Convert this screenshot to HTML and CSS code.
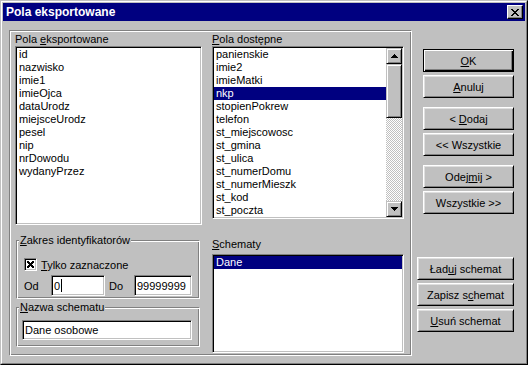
FILE: index.html
```html
<!DOCTYPE html>
<html lang="pl">
<head>
    <meta charset="UTF-8">
    <meta name="viewport" content="width=device-width, initial-scale=1.0">
    <title>Pola eksportowane</title>
    <link rel="stylesheet" href="styles.css">
</head>
<body>
<div class="window">
    <div class="frame">
        <div class="titlebar">
            <span class="title">Pola eksportowane</span>
            <button class="close-btn">
                <svg width="8" height="7" viewBox="0 0 8 7" shape-rendering="crispEdges"><path fill="#000" d="M0 0h2v1H0zM6 0h2v1H6zM1 1h2v1H1zM5 1h2v1H5zM2 2h4v1H2zM3 3h2v1H3zM2 4h4v1H2zM1 5h2v1H1zM5 5h2v1H5zM0 6h2v1H0zM6 6h2v1H6z"/></svg>
            </button>
        </div>

        <div class="content">
            <div class="panel">
                <div class="col-left">
                    <div class="label">Pola <u>e</u>ksportowane</div>
                    <ul class="listbox list-exported">
                        <li>id</li>
                        <li>nazwisko</li>
                        <li>imie1</li>
                        <li>imieOjca</li>
                        <li>dataUrodz</li>
                        <li>miejsceUrodz</li>
                        <li>pesel</li>
                        <li>nip</li>
                        <li>nrDowodu</li>
                        <li>wydanyPrzez</li>
                    </ul>

                    <fieldset class="group group-range">
                        <legend><u>Z</u>akres identyfikatorów</legend>
                        <div class="check-row">
                            <span class="checkbox">
                                <svg width="7" height="7" viewBox="0 0 7 7" shape-rendering="crispEdges"><path fill="#000" d="M0 0h2v1H0zM5 0h2v1H5zM0 1h3v1H0zM4 1h3v1H4zM1 2h5v1H1zM2 3h3v1H2zM1 4h5v1H1zM0 5h3v1H0zM4 5h3v1H4zM0 6h2v1H0zM5 6h2v1H5z"/></svg>
                            </span>
                            <span><u>T</u>ylko zaznaczone</span>
                        </div>
                        <div class="range-row">
                            <span class="range-label">Od</span>
                            <div class="edit edit-from">0<span class="caret"></span></div>
                            <span class="range-label range-to">Do</span>
                            <div class="edit edit-to">99999999</div>
                        </div>
                    </fieldset>

                    <fieldset class="group group-name">
                        <legend><u>N</u>azwa schematu</legend>
                        <div class="edit edit-name">Dane osobowe</div>
                    </fieldset>
                </div>

                <div class="col-right">
                    <div class="label"><u>P</u>ola dostępne</div>
                    <div class="listbox list-available">
                        <ul class="items">
                            <li>panienskie</li>
                            <li>imie2</li>
                            <li>imieMatki</li>
                            <li class="selected">nkp</li>
                            <li>stopienPokrew</li>
                            <li>telefon</li>
                            <li>st_miejscowosc</li>
                            <li>st_gmina</li>
                            <li>st_ulica</li>
                            <li>st_numerDomu</li>
                            <li>st_numerMieszk</li>
                            <li>st_kod</li>
                            <li>st_poczta</li>
                        </ul>
                        <div class="scrollbar">
                            <div class="sb-btn">
                                <svg width="7" height="4" viewBox="0 0 7 4" shape-rendering="crispEdges"><path fill="#000" d="M3 0h1v1H3zM2 1h3v1H2zM1 2h5v1H1zM0 3h7v1H0z"/></svg>
                            </div>
                            <div class="sb-thumb"></div>
                            <div class="sb-track"></div>
                            <div class="sb-btn">
                                <svg width="7" height="4" viewBox="0 0 7 4" shape-rendering="crispEdges"><path fill="#000" d="M0 0h7v1H0zM1 1h5v1H1zM2 2h3v1H2zM3 3h1v1H3z"/></svg>
                            </div>
                        </div>
                    </div>

                    <div class="label label-schemes"><u>S</u>chematy</div>
                    <ul class="listbox list-schemes">
                        <li class="selected">Dane</li>
                    </ul>
                </div>
            </div>

            <div class="sidebar">
                <div class="btn-group">
                    <button class="btn btn-default"><u>O</u>K</button>
                    <button class="btn"><u>A</u>nuluj</button>
                </div>
                <div class="btn-group">
                    <button class="btn">&lt; <u>D</u>odaj</button>
                    <button class="btn">&lt;&lt; Wszystkie</button>
                </div>
                <div class="btn-group">
                    <button class="btn">Odej<u>m</u>ij &gt;</button>
                    <button class="btn">Wszystkie &gt;&gt;</button>
                </div>
                <div class="btn-group btn-group-schemes">
                    <button class="btn btn-wide">Ład<u>u</u>j schemat</button>
                    <button class="btn btn-wide">Zapisz s<u>c</u>hemat</button>
                    <button class="btn btn-wide"><u>U</u>suń schemat</button>
                </div>
            </div>
        </div>
    </div>
</div>
</body>
</html>
```

FILE: styles.css
```css
* {
    box-sizing: border-box;
}
body {
    margin: 0;
    font-family: "Liberation Sans", Arial, sans-serif;
    font-size: 11px;
    color: #000;
    background: #c0c0c0;
}
u {
    text-decoration: underline;
}

/* window frame */
.window {
    width: 528px;
    height: 365px;
    background: #c0c0c0;
    border: 1px solid;
    border-color: #c0c0c0 #000 #000 #c0c0c0;
}
.frame {
    height: 100%;
    padding: 1px;
    border: 1px solid;
    border-color: #fff #808080 #808080 #fff;
}
.titlebar {
    height: 18px;
    display: flex;
    align-items: center;
    justify-content: space-between;
    padding: 0 2px 0 3px;
    background: #000080;
    color: #fff;
    font-size: 12px;
    font-weight: bold;
}
.close-btn {
    width: 16px;
    height: 14px;
    padding: 0;
    display: flex;
    align-items: center;
    justify-content: center;
    background: #c0c0c0;
    border: 1px solid;
    border-color: #fff #000 #000 #fff;
    box-shadow: inset -1px -1px #808080;
}

.content {
    display: flex;
    padding: 9px 11px 0 6px;
}

/* etched panel */
.panel {
    width: 403px;
    height: 326px;
    display: grid;
    grid-template-columns: 187px 192px;
    column-gap: 10px;
    align-items: start;
    padding: 2px 0 0 5px;
    border: 1px solid;
    border-color: #808080 #fff #fff #808080;
    box-shadow: inset 1px 1px #fff, inset -1px -1px #808080;
}
.label {
    height: 13px;
    line-height: 13px;
    white-space: nowrap;
}

/* list boxes */
.listbox {
    margin: 0;
    padding: 1px;
    list-style: none;
    background: #fff;
    border: 1px solid;
    border-color: #808080 #fff #fff #808080;
    box-shadow: inset 1px 1px #000, inset -1px -1px #c0c0c0;
    overflow: hidden;
}
.listbox li {
    height: 13px;
    line-height: 13px;
    padding-left: 2px;
    white-space: nowrap;
}
.listbox li.selected {
    background: #000080;
    color: #fff;
}
.list-exported {
    height: 179px;
}
.list-available {
    height: 173px;
    display: flex;
}
.list-available .items {
    flex: 1;
    margin: 0;
    padding: 0;
    list-style: none;
}
.label-schemes {
    margin-top: 19px;
}
.list-schemes {
    height: 99px;
    margin-top: 3px;
}

/* scrollbar */
.scrollbar {
    width: 16px;
    display: flex;
    flex-direction: column;
}
.sb-btn,
.sb-thumb {
    background: #c0c0c0;
    border: 1px solid;
    border-color: #c0c0c0 #000 #000 #c0c0c0;
    box-shadow: inset 1px 1px #fff, inset -1px -1px #808080;
}
.sb-btn {
    height: 16px;
    display: flex;
    align-items: center;
    justify-content: center;
}
.sb-thumb {
    height: 54px;
}
.sb-track {
    flex: 1;
    background-image: repeating-conic-gradient(#fff 0 25%, #c0c0c0 0 50%);
    background-size: 2px 2px;
}

/* group boxes */
.group {
    margin: 0 2px 0 1px;
    min-width: 0;
    border: 1px solid;
    border-color: #808080 #fff #fff #808080;
    box-shadow: inset 1px 1px #fff, inset -1px -1px #808080;
}
.group legend {
    padding: 0 1px;
    line-height: 13px;
    background: #c0c0c0;
}
.group-range {
    margin-top: 9px;
    padding: 11px 5px 2px 7px;
}
.group-range legend {
    margin-left: -5px;
}
.group-name {
    margin-top: 2px;
    padding: 6px 5px 6px 5px;
}
.group-name legend {
    margin-left: -3px;
}
.check-row {
    display: flex;
    align-items: center;
    gap: 4px;
    height: 13px;
}
.checkbox {
    width: 13px;
    height: 13px;
    display: flex;
    align-items: center;
    justify-content: center;
    background: #fff;
    border: 1px solid;
    border-color: #808080 #fff #fff #808080;
    box-shadow: inset 1px 1px #000, inset -1px -1px #c0c0c0;
}
.range-row {
    display: flex;
    align-items: center;
    margin-top: 4px;
}
.range-label {
    width: 27px;
}
.range-to {
    width: 29px;
    padding-left: 4px;
}

/* edits */
.edit {
    height: 21px;
    display: flex;
    align-items: center;
    padding: 0 2px;
    background: #fff;
    white-space: nowrap;
    border: 1px solid;
    border-color: #808080 #fff #fff #808080;
    box-shadow: inset 1px 1px #000, inset -1px -1px #c0c0c0;
}
.edit-from {
    width: 54px;
}
.edit-to {
    width: 58px;
}
.edit-name {
    width: 170px;
    height: 20px;
}
.caret {
    width: 1px;
    height: 13px;
    margin-left: 1px;
    background: #000;
}

/* buttons */
.sidebar {
    flex: 1;
    display: flex;
    flex-direction: column;
    align-items: flex-end;
    padding-top: 19px;
}
.btn-group {
    display: flex;
    flex-direction: column;
    gap: 3px;
}
.btn-group + .btn-group {
    margin-top: 9px;
}
.btn-group-schemes.btn-group {
    margin-top: 43px;
}
.btn {
    width: 91px;
    height: 23px;
    padding: 0;
    font-family: inherit;
    font-size: 11px;
    color: #000;
    background: #c0c0c0;
    border: 1px solid;
    border-color: #fff #000 #000 #fff;
    box-shadow: inset 1px 1px #dfdfdf, inset -1px -1px #808080;
    white-space: nowrap;
}
.btn-default {
    border-color: #000;
    box-shadow: inset 1px 1px #fff, inset -1px -1px #000, inset -2px -2px #808080;
}
.btn-wide {
    width: 97px;
}
```
